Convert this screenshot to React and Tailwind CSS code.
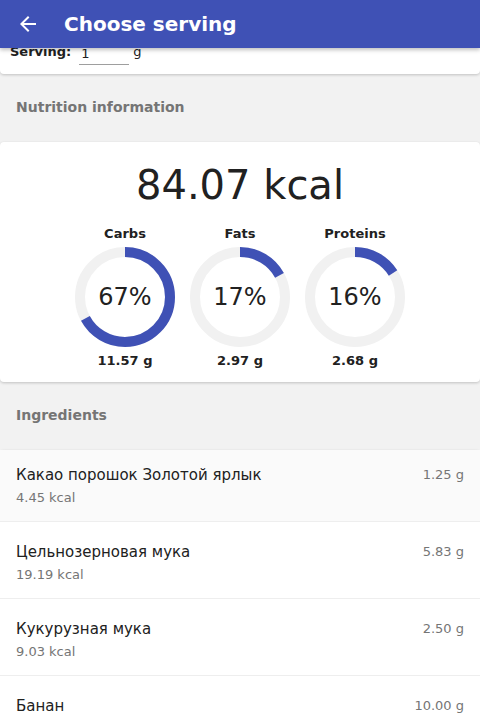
import React from 'react';

const macros = [
  { label: 'Carbs', pct: 67, grams: '11.57 g' },
  { label: 'Fats', pct: 17, grams: '2.97 g' },
  { label: 'Proteins', pct: 16, grams: '2.68 g' },
];

const ingredients = [
  { name: 'Какао порошок Золотой ярлык', kcal: '4.45 kcal', grams: '1.25 g' },
  { name: 'Цельнозерновая мука', kcal: '19.19 kcal', grams: '5.83 g' },
  { name: 'Кукурузная мука', kcal: '9.03 kcal', grams: '2.50 g' },
  { name: 'Банан', kcal: '', grams: '10.00 g' },
];

const Ring = ({ pct }) => {
  const r = 45;
  const c = 2 * Math.PI * r;
  return (
    <div className="relative w-[100px] h-[100px]">
      <svg width="100" height="100" viewBox="0 0 100 100" className="-rotate-90">
        <circle cx="50" cy="50" r={r} fill="none" stroke="#f1f1f1" strokeWidth="10" />
        <circle
          cx="50"
          cy="50"
          r={r}
          fill="none"
          stroke="#3f51b5"
          strokeWidth="10"
          strokeDasharray={`${(c * pct) / 100} ${c}`}
        />
      </svg>
      <div className="absolute inset-0 flex items-center justify-center text-[24px] text-[#212121]">
        {pct}%
      </div>
    </div>
  );
};

export default function App() {
  return (
    <div className="w-[480px] h-[715px] overflow-hidden bg-[#f2f2f2] font-['DejaVu_Sans',sans-serif] text-[#212121]">
      {/* Toolbar */}
      <div className="relative z-10 h-12 bg-[#3f51b5] flex items-center px-4 shadow-[0_2px_4px_rgba(0,0,0,0.25)]">
        <svg width="24" height="24" viewBox="0 0 24 24" fill="white">
          <path d="M20 11H7.83l5.59-5.59L12 4l-8 8 8 8 1.41-1.41L7.83 13H20v-2z" />
        </svg>
        <h1 className="ml-6 text-[20px] font-bold text-white">Choose serving</h1>
      </div>

      {/* Serving card (scrolled under toolbar) */}
      <div className="h-[26px] overflow-hidden bg-white rounded-b shadow-[0_1px_3px_rgba(0,0,0,0.2)]">
        <div className="-mt-[16px] h-10 flex items-center px-[10px]">
          <span className="text-[13px] font-bold">Serving:</span>
          <div className="ml-[8px] w-[50px] border-b border-[#9e9e9e] text-[13px] pl-[2px] leading-[20px] mt-[4px]">1</div>
          <span className="ml-[4px] text-[13px]">g</span>
        </div>
      </div>

      {/* Nutrition section */}
      <div className="h-[68px] flex items-center px-4 pb-[2px]">
        <h2 className="text-[14px] font-bold text-[#757575]">Nutrition information</h2>
      </div>
      <div className="bg-white rounded shadow-[0_1px_3px_rgba(0,0,0,0.2)] pt-[19px] pb-[13px]">
        <div className="text-center text-[40px] leading-[48px]">84.07 kcal</div>
        <div className="mt-[17px] flex justify-center gap-[15px]">
          {macros.map((m) => (
            <div key={m.label} className="w-[100px] flex flex-col items-center">
              <div className="text-[13px] font-bold leading-4">{m.label}</div>
              <div className="mt-[5px]">
                <Ring pct={m.pct} />
              </div>
              <div className="mt-[6px] text-[13px] font-bold leading-4">{m.grams}</div>
            </div>
          ))}
        </div>
      </div>

      {/* Ingredients section */}
      <div className="h-[68px] flex items-center px-4 pb-[2px]">
        <h2 className="text-[14px] font-bold text-[#757575]">Ingredients</h2>
      </div>
      <div className="bg-white rounded-t shadow-[0_1px_3px_rgba(0,0,0,0.2)]">
        {ingredients.map((ing, i) => (
          <div
            key={ing.name}
            className={`flex justify-between px-4 pb-[15px] border-b border-[#eeeeee] ${
              i === 0 ? 'bg-[#fafafa] pt-[15px]' : 'bg-white pt-5'
            }`}
          >
            <div>
              <div className="text-[15px] leading-5">{ing.name}</div>
              <div className="mt-[5px] text-[13px] leading-4 text-[#757575]">{ing.kcal}</div>
            </div>
            <div className="text-[13px] leading-5 text-[#757575]">{ing.grams}</div>
          </div>
        ))}
      </div>
    </div>
  );
}
